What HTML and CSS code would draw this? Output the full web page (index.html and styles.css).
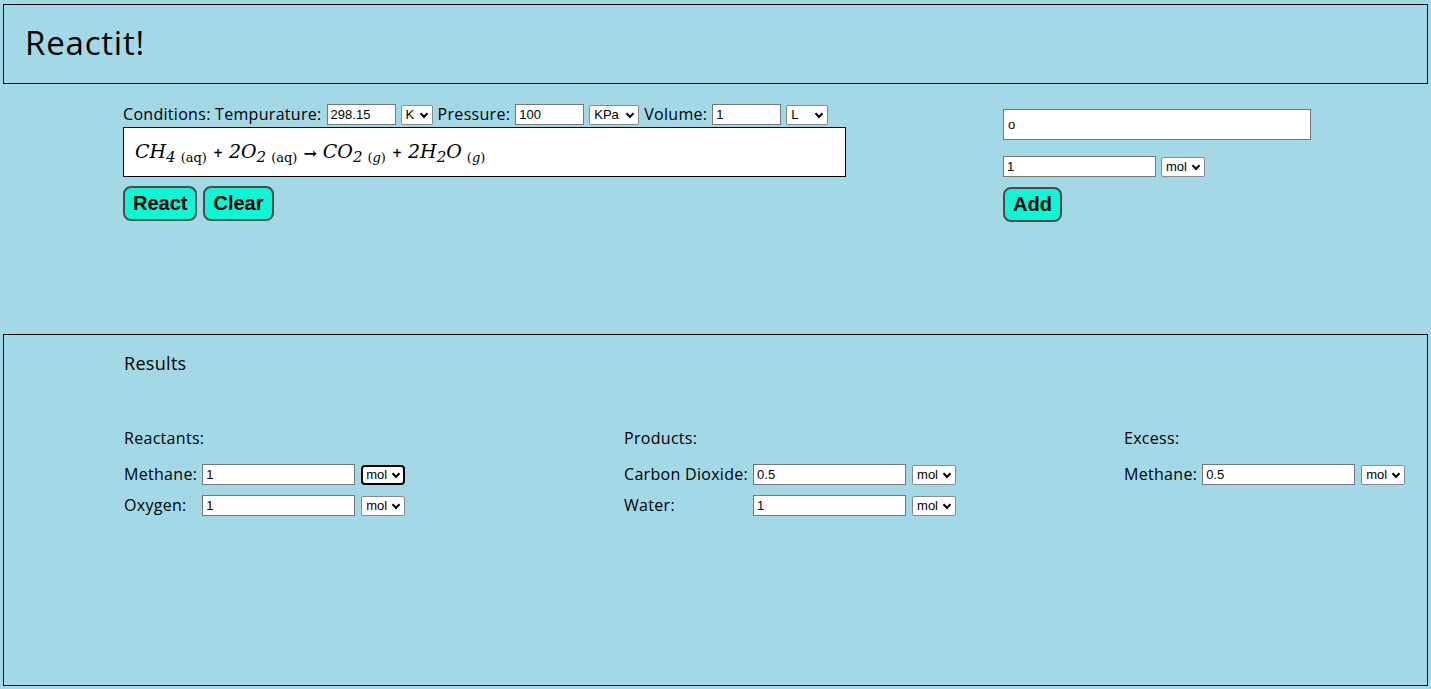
FILE: index.html
```html
<!DOCTYPE html>
<html lang="en">
<head>
<meta charset="utf-8">
<title>Reactit!</title>
<link rel="stylesheet" href="styles.css">
</head>
<body>
<header class="top">
  <h1 class="brand">Reactit!</h1>
</header>

<main class="work">
  <section class="reaction">
    <div class="conditions">
      <span class="lbl">Conditions: Tempurature:</span>
      <input class="num" type="text" value="298.15">
      <span class="sel unit-k"><select><option>K</option></select></span>
      <span class="lbl">Pressure:</span>
      <input class="num" type="text" value="100">
      <span class="sel unit-kpa"><select><option>KPa</option></select></span>
      <span class="lbl">Volume:</span>
      <input class="num" type="text" value="1">
      <span class="sel unit-l"><select><option>L</option></select></span>
    </div>
    <div class="equation">
      <span>CH<sub>4</sub><sub class="state">(aq)</sub></span>
      <span class="plus">+</span>
      <span>2O<sub>2</sub><sub class="state">(aq)</sub></span>
      <span class="arrow">→</span>
      <span>CO<sub>2</sub><sub class="state">(<i>g</i>)</sub></span>
      <span class="plus">+</span>
      <span>2H<sub>2</sub>O<sub class="state">(<i>g</i>)</sub></span>
    </div>
    <div class="actions">
      <button class="btn" type="button">React</button>
      <button class="btn" type="button">Clear</button>
    </div>
  </section>

  <section class="adder">
    <input class="species" type="text" value="o">
    <div class="amount">
      <input class="qty" type="text" value="1">
      <span class="sel unit-mol"><select><option>mol</option></select></span>
    </div>
    <button class="btn" type="button">Add</button>
  </section>
</main>

<section class="results">
  <h2 class="results-title">Results</h2>
  <div class="cols">
    <div class="col">
      <h3 class="col-title">Reactants:</h3>
      <table class="rows">
        <tr><td class="name">Methane:</td><td><input class="qty" type="text" value="1"></td><td><span class="sel unit-mol focused"><select><option>mol</option></select></span></td></tr>
        <tr><td class="name">Oxygen:</td><td><input class="qty" type="text" value="1"></td><td><span class="sel unit-mol"><select><option>mol</option></select></span></td></tr>
      </table>
    </div>
    <div class="col">
      <h3 class="col-title">Products:</h3>
      <table class="rows">
        <tr><td class="name">Carbon Dioxide:</td><td><input class="qty" type="text" value="0.5"></td><td><span class="sel unit-mol"><select><option>mol</option></select></span></td></tr>
        <tr><td class="name">Water:</td><td><input class="qty" type="text" value="1"></td><td><span class="sel unit-mol"><select><option>mol</option></select></span></td></tr>
      </table>
    </div>
    <div class="col">
      <h3 class="col-title">Excess:</h3>
      <table class="rows">
        <tr><td class="name">Methane:</td><td><input class="qty" type="text" value="0.5"></td><td><span class="sel unit-mol"><select><option>mol</option></select></span></td></tr>
      </table>
    </div>
  </div>
</section>
</body>
</html>
```

FILE: styles.css
```css
* { box-sizing: border-box; }

html, body {
  background: #a3d9e6;
}

body {
  margin: 0;
  padding: 4px 3px 0 3px;
  font-family: "Open Sans", "Liberation Sans", sans-serif;
  font-size: 16px;
  letter-spacing: 0.3px;
  color: #000;
}

.top {
  height: 80px;
  border: 1px solid #000;
  display: flex;
  align-items: center;
  padding-left: 21px;
}

.brand {
  margin: 0;
  font-size: 33px;
  font-weight: 400;
  letter-spacing: 0.8px;
  padding-bottom: 3px;
}

.work {
  height: 250px;
  display: flex;
  padding: 20px 0 0 120px;
}

.reaction {
  width: 723px;
}

.conditions {
  display: flex;
  align-items: center;
  gap: 5px;
  height: 21px;
  white-space: nowrap;
}

.lbl { line-height: 21px; }

input, select {
  font-family: "Liberation Sans", Arial, sans-serif;
  font-size: 13px;
  letter-spacing: 0;
  color: #000;
  background: #fff;
  margin: 0;
}

input {
  display: block;
  height: 21px;
  padding: 1px 3px;
  border: 1px solid #767676;
  border-radius: 0;
}

.sel {
  position: relative;
  display: block;
  height: 20px;
}

.sel select {
  display: block;
  -webkit-appearance: none;
  appearance: none;
  width: 100%;
  height: 100%;
  padding: 0 0 0 4px;
  border: 1px solid #8a8a8a;
  border-radius: 2px;
  outline: none;
}

.sel::after {
  content: "";
  position: absolute;
  right: 6px;
  top: 6px;
  width: 4px;
  height: 4px;
  border-right: 2px solid #000;
  border-bottom: 2px solid #000;
  transform: rotate(45deg);
  pointer-events: none;
}

.sel.focused select {
  border: 2px solid #000;
  border-radius: 4px;
  padding-left: 3px;
}

.num { width: 69px; }
.unit-k { width: 32px; }
.unit-kpa { width: 50px; }
.unit-l { width: 42px; }
.unit-mol { width: 44px; }

.equation {
  margin-top: 2px;
  height: 50px;
  width: 723px;
  background: #fff;
  border: 1px solid #000;
  display: flex;
  align-items: center;
  gap: 6px;
  padding: 2px 0 0 11px;
  font-family: "DejaVu Serif", "Liberation Serif", serif;
  font-style: italic;
  font-size: 19px;
  letter-spacing: 0;
  white-space: nowrap;
}

.equation sub {
  font-size: 15px;
  vertical-align: -4px;
}

.equation .state {
  font-style: normal;
  font-size: 13px;
  margin-left: 5px;
}

.equation .plus {
  font-style: normal;
  font-size: 12px;
  font-weight: 700;
}

.equation .arrow {
  font-style: normal;
  font-weight: 700;
  font-size: 16px;
}

.actions {
  margin-top: 9px;
  display: flex;
  gap: 6px;
}

.btn {
  height: 35px;
  padding: 0 8px;
  background: #0cf7d6;
  border: 2px solid #4a4a4a;
  border-radius: 8px;
  font-family: "Liberation Sans", Arial, sans-serif;
  font-weight: 700;
  font-size: 20px;
  letter-spacing: 0;
  color: #000;
}

.adder {
  margin-left: 157px;
  padding-top: 5px;
  display: flex;
  flex-direction: column;
  align-items: flex-start;
}

.species {
  width: 308px;
  height: 31px;
  padding: 1px 4px;
}

.amount {
  margin-top: 16px;
  display: flex;
  align-items: center;
  gap: 5px;
}

.qty {
  width: 153px;
}

.adder .btn {
  margin-top: 10px;
}

.results {
  height: 352px;
  border: 1px solid #000;
  padding: 16px 0 0 120px;
}

.results-title {
  margin: 0;
  font-size: 18px;
  font-weight: 400;
}

.cols {
  margin-top: 52px;
  display: grid;
  grid-template-columns: 500px 500px 1fr;
}

.col-title {
  margin: 0 0 15px;
  font-size: 16px;
  font-weight: 400;
}

.rows {
  border-collapse: collapse;
}

.rows td {
  padding: 0 0 10px;
  line-height: 21px;
  vertical-align: middle;
}

.rows td.name {
  padding-right: 5px;
  white-space: nowrap;
}

.rows td:last-child {
  padding-left: 6px;
}
```
